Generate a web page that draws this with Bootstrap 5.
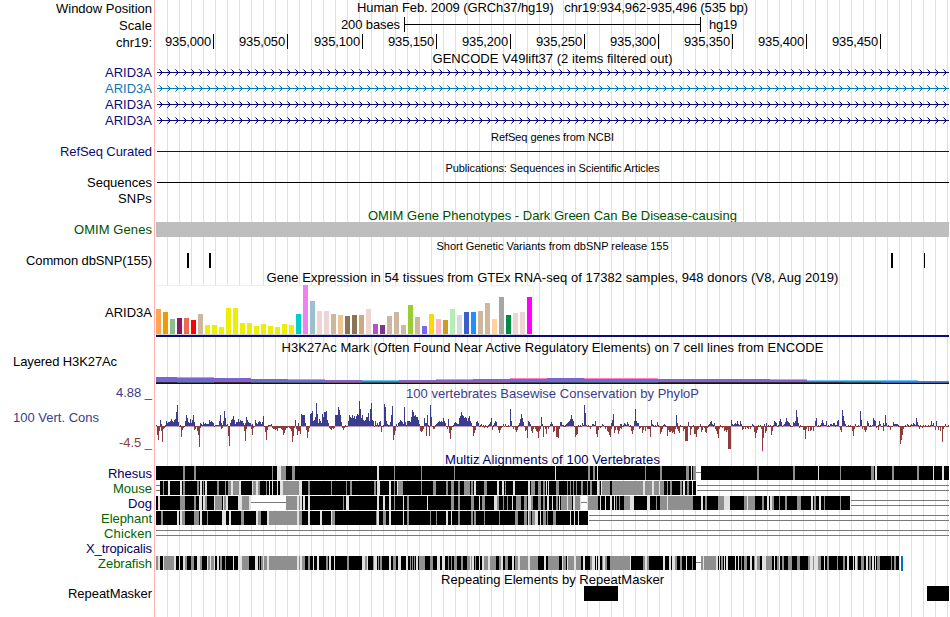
<!DOCTYPE html>
<html lang="en">
<head>
    <meta charset="UTF-8">
    <meta name="viewport" content="width=device-width, initial-scale=1.0">
    <title>chr19:934,962-935,496</title>
    <link rel="stylesheet" href="https://cdn.jsdelivr.net/npm/bootstrap@5.3.0/dist/css/bootstrap.min.css">
    <style>
        body {
            font-family: "Liberation Sans", Arial, sans-serif;
            font-size: 13px;
            line-height: 16px;
            color: #000;
            background: #fff;
        }

        .browser { width: 949px; height: 617px; }

        /* left column with the red divider */
        .side {
            width: 155px;
            border-right: 1px solid #ffb4b4;
            white-space: nowrap;
        }

        .side > div { padding-right: 2px; }
        .side .from-left { padding-left: 13px; }

        /* guide lines every 12px */
        .data {
            width: 793px;
            margin-left: 1px;
            white-space: pre;
            background: repeating-linear-gradient(90deg, transparent 0 11px, #dcdcff 11px 12px);
        }

        .data svg { display: block; flex-shrink: 0; shape-rendering: crispEdges; overflow: visible; }

        .h13 { height: 13px; }
        .h14 { height: 14px; }
        .h15 { height: 15px; }
        .h16 { height: 16px; }
        .h17 { height: 17px; }
        .h20 { height: 20px; }
        .h27 { height: 27px; }
        .h52 { height: 52px; }
        .h71 { height: 71px; }

        /* small text nudges inside a fixed row */
        .drop1 { padding-top: 1px; }
        .drop2 { padding-top: 2px; }
        .drop3 { padding-top: 3px; }

        .minor { font-size: 11px; }
        .navy { color: #0c0c78; }
        .teal { color: #0c78b4; }
        .green { color: #005000; }
        .cons { color: #3c3c8c; }
        .anti { color: #8c3c3c; }
        .species { color: #006400; }
        .multiz { color: #000064; }

        .tick { border-right: 1px solid #000; height: 15px; width: 74px; padding-right: 2px; }
        .tick.t0 { width: 58px; }
        .tick.t2 { width: 75px; }
        .before-scale { width: 244px; }
        .scalebar { width: 297px; height: 15px; border: solid #000; border-width: 0 1px; }
        .scalebar div { height: 1px; margin-top: 7px; background: #000; }
    </style>
</head>
<body>
<div class="browser d-flex">
    <div class="side d-flex flex-column text-end flex-shrink-0">
        <div class="h17 drop1"><span data-w="96">Window Position</span></div>
        <div class="h17 drop1"><span data-w="33">Scale</span></div>
        <div class="h17 drop1"><span data-w="36">chr19:</span></div>
        <div class="h13"></div>
        <div class="h16 drop1 navy"><span data-w="47">ARID3A</span></div>
        <div class="h16 drop1 teal"><span data-w="47">ARID3A</span></div>
        <div class="h16 drop1 navy"><span data-w="47">ARID3A</span></div>
        <div class="h16 drop1 navy"><span data-w="47">ARID3A</span></div>
        <div class="h16"></div>
        <div class="h16 navy"><span data-w="92">RefSeq Curated</span></div>
        <div class="h15"></div>
        <div class="h15"><span data-w="65">Sequences</span></div>
        <div class="h17 drop1"><span data-w="34">SNPs</span></div>
        <div class="h15"></div>
        <div class="h15 green"><span data-w="78">OMIM Genes</span></div>
        <div class="h16"></div>
        <div class="h15"><span data-w="126">Common dbSNP(155)</span></div>
        <div class="h17"></div>
        <div class="h52 drop3 d-flex align-items-center justify-content-end"><span data-w="47">ARID3A</span></div>
        <div class="h16"></div>
        <div class="h27 drop1 from-left text-start"><span data-w="104">Layered H3K27Ac</span></div>
        <div class="h71 d-flex flex-column justify-content-between pt-1">
            <div class="drop1 cons"><span data-w="36">4.88 _</span></div>
            <div class="cons from-left text-start"><span data-w="86">100 Vert. Cons</span></div>
            <div class="anti"><span data-w="33">-4.5 _</span></div>
        </div>
        <div class="h15"></div>
        <div class="h15 multiz"><span data-w="44">Rhesus</span></div>
        <div class="h15 species"><span data-w="39">Mouse</span></div>
        <div class="h15 multiz"><span data-w="24">Dog</span></div>
        <div class="h15 species"><span data-w="51">Elephant</span></div>
        <div class="h15 species"><span data-w="48">Chicken</span></div>
        <div class="h15 multiz"><span data-w="66">X_tropicalis</span></div>
        <div class="h15 species"><span data-w="54">Zebrafish</span></div>
        <div class="h15"></div>
        <div class="h15"><span data-w="84">RepeatMasker</span></div>
    </div>

    <div class="data d-flex flex-column text-center flex-shrink-0">
        <div class="h17"><span data-w="391">Human Feb. 2009 (GRCh37/hg19)   chr19:934,962-935,496 (535 bp)</span></div>
        <div class="h17 d-flex">
            <div class="before-scale text-end"><span data-w="59">200 bases</span></div>
            <div class="scalebar ms-1 me-2"><div></div></div>
            <div><span data-w="28">hg19</span></div>
        </div>
        <div class="h17 d-flex text-end" id="ruler"></div>
        <div class="h13"><span data-w="240">GENCODE V49lift37 (2 items filtered out)</span></div>
        <svg class="gene" width="793" height="16" data-color="#0c0c78"></svg>
        <svg class="gene" width="793" height="16" data-color="#0c78b4"></svg>
        <svg class="gene" width="793" height="16" data-color="#0c0c78"></svg>
        <svg class="gene" width="793" height="16" data-color="#0c0c78"></svg>
        <div class="h16 drop1 minor"><span data-w="123">RefSeq genes from NCBI</span></div>
        <svg width="793" height="16"><rect x="1" y="7" width="792" height="1" fill="#0c0c78"/></svg>
        <div class="h15 minor"><span data-w="214">Publications: Sequences in Scientific Articles</span></div>
        <svg width="793" height="15"><rect x="1" y="7" width="792" height="1"/></svg>
        <div class="h17"></div>
        <div class="h15 drop1 green"><span data-w="369">OMIM Gene Phenotypes - Dark Green Can Be Disease-causing</span></div>
        <svg width="793" height="15"><rect width="793" height="15" fill="#bebebe"/></svg>
        <div class="h16 drop1 minor"><span data-w="232">Short Genetic Variants from dbSNP release 155</span></div>
        <svg width="793" height="15">
            <rect x="31" width="2" height="15"/><rect x="53" width="2" height="15"/>
            <rect x="735" width="2" height="15"/><rect x="768" width="1" height="15"/>
        </svg>
        <div class="h17 drop2"><span data-w="572">Gene Expression in 54 tissues from GTEx RNA-seq of 17382 samples, 948 donors (V8, Aug 2019)</span></div>
        <svg id="gtex" width="793" height="52"></svg>
        <div class="h20 drop3"><span data-w="542">H3K27Ac Mark (Often Found Near Active Regulatory Elements) on 7 cell lines from ENCODE</span></div>
        <svg id="h3k" width="793" height="27"></svg>
        <div class="h16 drop2 cons"><span data-w="293">100 vertebrates Basewise Conservation by PhyloP</span></div>
        <svg id="phylop" width="793" height="52"></svg>
        <div class="h14 multiz"><span data-w="215">Multiz Alignments of 100 Vertebrates</span></div>
        <svg id="multiz" width="793" height="105"></svg>
        <div class="h15 drop1"><span data-w="223">Repeating Elements by RepeatMasker</span></div>
        <svg width="793" height="15"><rect x="428" width="34" height="15"/><rect x="771" width="22" height="15"/></svg>
    </div>
</div>

<script src="https://cdn.jsdelivr.net/npm/bootstrap@5.3.0/dist/js/bootstrap.bundle.min.js"></script>
<script>
    const LEFT = 156;

    function rect(x, y, w, h, fill) {
        return `<rect x="${x}" y="${y}" width="${w}" height="${h}" fill="${fill}"/>`;
    }

    // Ruler labels, one every 50 bases
    let ruler = '';
    for (let i = 0; i < 10; i++) {
        ruler += `<div class="tick flex-shrink-0 t${i}"><span data-w="46">935,${String(i * 50).padStart(3, '0')}</span></div>`;
    }
    document.getElementById('ruler').innerHTML = ruler;

    // Transcripts: a line with strand arrows
    document.querySelectorAll('.gene').forEach(svg => {
        const c = svg.dataset.color;
        let out = rect(1, 8, 792, 1, c);
        for (let x = 6; x < 793; x += 8) {
            out += rect(x - 1, 7, 1, 1, c) + rect(x - 1, 9, 1, 1, c);
            out += rect(x - 2, 6, 1, 1, c) + rect(x - 2, 10, 1, 1, c);
            out += `<g opacity=".7">${rect(x - 3, 5, 1, 1, c)}${rect(x - 3, 11, 1, 1, c)}</g>`;
            out += `<g opacity=".3">${rect(x - 2, 7, 1, 1, c)}${rect(x - 2, 9, 1, 1, c)}</g>`;
        }
        svg.innerHTML = out;
    });

    // GTEx: height and colour per tissue
    const heights = [25,22,15,16,16,14,20,9,9,7,26,26,11,11,8,10,8,7,10,9,20,49,33,23,23,20,19,18,19,19,25,10,9,18,22,9,
        29,17,8,20,15,14,25,19,22,22,23,31,15,37,19,21,22,37];
    const tissueColors = ('FFA54F EE9A00 8FBC8F 8B1C62 EE6A50 FF0000 CDB79E ' + 'EEEE00 '.repeat(13) +
        '00CDCD EE82EE 9AC0CD EED5D2 EED5D2 CDB79E EEC591 8B7355 8B7355 CDAA7D EED5D2 B452CD 7A378B CDB79E CDB79E CDB79E ' +
        '9ACD32 CDB79E 7A67EE FFD700 FFB6C1 CD9B1D B4EEB4 D9D9D9 3A5FCD 1E90FF CDB79E CDB79E FFD39B A6A6A6 008B45 EED5D2 EED5D2 FF00FF').split(' ');
    let gtex = rect(0, 0, 378, 50, '#f0f0f0') + rect(0, 1, 377, 48, '#fff') + rect(0, 49, 377, 1, '#d2d2d2');
    heights.forEach((h, i) => gtex += rect(i * 7, 49 - h, 5, h, '#' + tissueColors[i]));
    document.getElementById('gtex').innerHTML = gtex + rect(0, 50, 793, 2, '#0c0c78');

    // Layered signal: start, top, cap colour, base colour
    const layers = [
        [156,20,'','#2d2b35'], [177,20,'#ff80c8','#3c5a64'], [214,21,'','#46282d'], [251,22,'','#3c5a64'],
        [288,22,'#ff80c8','#466478'], [325,23,'','#825064'], [362,23,'#64c8ff','#3c5a64'], [399,23,'','#825064'],
        [436,22,'#ff80c8','#825064'], [473,22,'','#825064'], [510,21,'#ff80c8','#3c4b5a'], [547,21,'','#3c4b5a'],
        [584,21,'#ff80c8','#3c5a64'], [621,21,'#ff80c8','#3c5a64'], [658,22,'','#3c2d32'], [770,22,'#64c8ff','#3c2d32'],
        [807,23,'#64c8ff','#462d3c'], [844,23,'#64c8ff','#3c4b5a'], [881,23,'#64c8ff','#4664b4'], [918,24,'','#4664b4'], [949]
    ];
    let h3k = '';
    for (let i = 0; i < layers.length - 1; i++) {
        const [x, top, cap, base] = layers[i];
        const w = layers[i + 1][0] - x;
        h3k += rect(x - LEFT, top, w, 25 - top, '#7864d2');
        if (cap) h3k += rect(x - LEFT, top, w, 1, cap);
        h3k += rect(x - LEFT, 25, w, 1, base);
    }
    document.getElementById('h3k').innerHTML = h3k + rect(0, 26, 793, 1, '#140f14');

    // Conservation scores, runs of neighbouring columns as start:heights
    const up = `156:1 160:6,2 166:5,3,4,4,5,7,5,4,6,7,14,21,4 185:5,11,8,4,3,7,3,6,11,4 200:3,2,1,4,2,3,2,2,2,6,4,5,4,3
        215:1,1,1,1,5,11,3,1,5,15,8,1,2 230:3,6,7,10,6,2,4,4,7,4,6,5,5,3,1,3,9,6,4,3,3,1,2 255:6,3,2,4,5,4,2,4,10 269:1,1,2
        295:6 298:3 301:12,11,11,11,3 310:12,13,15,5,6,9,23,12,3,7,5,3,12,9,14,14,15,6,3 335:11,11,11,19,16,11,4
        348:5,11,9,8,11,8,10,7,10,12,11,25,17,8,11,6,5,6,9,9,13,5,17,23,6,5 375:5,1,3 379:4,5 384:22,19,5,2 389:1,4,11,20
        396:2 398:3,4,6,5,4,2,19,4,1,5,5,5,4,9,16,14,10,11,9,9,6,2 424:8,3,3,11 430:21,9 436:2,3,4,5,4,5,4,8,5,3 448:7
        454:3,4,3,2,2,8,10,14,11,10,8,9,8,5,8,10,5,3 476:4,5,3 481:2 489:2,4,8 494:3,5,4 503:2 505:2 510:17,5 519:3,7,12,8,4
        528:5,4,2 541:9,2 550:2,4,2 560:4,4,1 566:2,3,4,5,7,11,7,5 582:3,1,21,13,1 592:2,2,1,5 602:2,1 611:3,6,12 620:2,2
        624:3,2,1,4,2 634:5,17,5,3,3 651:6,2 657:4 664:2 676:11,3 688:4 700:2 709:2,4,5,2 714:3 731:6,2,1,2,3,2,5,2,1,5,2 752:2
        764:2 766:3 774:5,4,3 779:5,7,4 783:1,2,4,8,5,4,3 793:4,3,5,16,9,3 815:5,8 821:3,6,3,1,1,5 830:2,2,1,3,3 836:1,5,6
        842:16,10,5,2 855:2 860:15,6 867:5,3 872:1,8,6,5 878:1,5,2 883:3,1,11,3 893:4,2,2,2,2 907:2 911:2,1,3,2,1,8,4 931:5,1,3
        936:5 945:2`;
    const down = `157:9,14,5,1,5,16,3,2 181:11,4,2 194:4,3,1,5,9,21,2 221:3,2 228:10,20 244:5,15,3 251:3,9,2 265:6,14,4
        272:2,3,3,4,3,5,2,2,2,3,4,9,7,4,2,2,1,2,3,5,16,10,2 296:3,9,5,5,8 306:4,12,6,2 329:2,3,4,2,3,2 342:2,4,2 381:6
        393:14,9,5 420:5,6,5,3 426:10 429:10 433:3,3 447:3,1,7,13,4 473:10,7,4 484:2 487:2 492:4 498:4,7,4,2 513:3,1,4,6,4
        525:5,4,12 531:5,7,3,1,3,5,6,12,5,3 543:11,1,3,8,1,3 553:6,5,1,11,11,12,3 575:11,9,8 590:3 596:8,11,4,1,2
        605:3,1,5,6,9,11,3 614:7,4,1,4,8,5,2,3 631:5,8,4 639:3,2,1,7,4,1,5,1,3,3,3,11 660:8,6,3 667:10,4,6,6,5,7,6,8,3,1,3,5,7
        683:5,3,15,15,15 690:9,3 694:8,8,11,4,3,1,1,6,4,1,2,6,7,2 715:3,5,8,12,3 722:2,1,5,4,6,4,23,23,23 742:4,3,1,3,1,2,3,1,3
        754:6,12,7,4 761:3,24,12,1,7,5 771:9,5 799:2 803:4,4,13,3,1,5,1,5,4,1,5 840:4,6 852:5,10,3 862:3,1,4,6,4 876:2,1,4
        883:5 890:4 900:18,14,9,3 919:3 922:2 935:4 938:4,1,5,1,16,3`;

    function bars(text) {
        const cols = {};
        text.trim().split(/\s+/).forEach(run => {
            const [start, list] = run.split(':');
            list.split(',').forEach((h, i) => cols[+start + i] = +h);
        });
        return cols;
    }

    const ups = bars(up), downs = bars(down);
    let phylop = '';
    for (let x = LEFT; x < 949; x++) {
        if (ups[x]) phylop += rect(x - LEFT, 26 - ups[x], 1, ups[x], '#3c3c8c');
        if (downs[x]) phylop += rect(x - LEFT, 26, 1, downs[x], '#8c3c3c');
        else phylop += rect(x - LEFT, 26, 1, 1, ups[x] ? '#b4a0be' : '#8c3c3c');
        if (!ups[x] && !downs[x] && x * 7 % 5 < 2) phylop += rect(x - LEFT, 25, 1, 1, '#3c3c8c');
    }
    phylop += rect(762 - LEFT, 49, 1, 2, '#ff00ff');
    document.getElementById('phylop').innerHTML = phylop;

    // Alignments: black blocks, then g (grey) and l (light) stripes as start+width
    const species = [
        {
            blocks: [[156,696],[701,949]], single: [[696,701]], double: [],
            stripes: `g183+2 g194+2 g272+1 l277+4 g281+5 g292+3 l377+2 g394+1 g421+1 g454+1 l555+1 g588+2 g593+2 l597+1 g645+1 g660+2
                g686+3 l691+1 g693+3 g757+2 g793+2 l818+1 g840+1 g871+3 l875+2 g892+2 g917+2 l933+1 l942+2`
        },
        {
            blocks: [[160,696]], single: [], double: [[156,160],[697,949]],
            stripes: `g163+1 l168+2 l180+2 g183+2 g197+2 l200+2 g203+1 l205+2 g217+2 g225+1 g228+3 l231+2 g233+6 l239+2 l252+1 g253+3
                l256+2 g258+2 g266+1 l269+1 l272+1 l277+1 l280+3 g283+16 l299+3 g308+2 g331+1 g346+1 g350+2 g374+2 l377+3 l389+2
                g394+1 l397+1 g398+5 g421+1 g433+3 g446+2 g451+3 g458+2 g464+6 g471+2 l474+2 g484+3 l497+2 l502+2 g505+1 l513+2
                l528+2 g531+4 g538+3 g543+2 l546+1 l548+1 g556+3 g567+1 g570+1 g573+1 g576+1 g581+2 g587+1 g590+2 l597+2 g599+1
                l601+1 g602+8 g612+31 l643+2 g645+7 l652+2 g654+5 l659+1 g660+4 g667+1 g670+2 g680+2 l683+2 g687+2 l692+1`
        },
        {
            blocks: [[156,249],[286,581],[588,850]], single: [[251,286],[581,587]], double: [[851,949]],
            stripes: `l158+2 g180+5 g194+2 l199+3 l203+2 g205+2 l214+1 g215+7 l223+1 g224+2 l226+2 l238+4 g242+7 l249+2 g286+11 l297+2
                g299+1 l300+2 l303+2 l308+2 g343+1 l346+3 l377+2 l383+2 l389+2 g394+1 l403+1 g407+2 l427+1 g451+3 g458+2 g471+3
                l479+1 g482+3 l494+3 g497+2 g503+1 g507+1 l512+1 g516+5 g524+3 l528+3 g531+2 g538+3 g543+2 l547+2 l552+1 g556+2
                l559+1 g561+6 l567+1 g568+4 l573+2 g575+5 l580+1 l587+1 g588+10 l600+1 l605+1 l610+2 l614+1 g616+1 g619+1 g624+6
                l630+4 l647+3 g656+1 g660+7 l667+1 g668+25 l701+2 g705+2 g718+3 g721+3 l724+6 g744+3 l747+1 g748+7 g762+2 l767+2
                l770+2 g772+2 g779+1 g785+2 g797+4 l811+2 g814+2 l819+2 g824+1 g840+1`
        },
        {
            blocks: [[156,588]], single: [], double: [[589,949]],
            stripes: `g161+2 l177+2 l180+2 g182+3 g194+5 l200+2 g207+1 l222+4 l229+2 g241+3 l256+2 g258+3 l267+2 g269+28 l297+2 g299+3
                l308+2 l320+2 l331+1 g332+3 g376+1 l377+2 g383+3 l389+2 l403+1 g407+2 g430+1 g436+1 l446+2 l451+1 g458+2 g471+2
                g474+2 g484+1 g499+1 g515+3 g524+3 l528+1 g529+2 g532+3 l535+3 l540+1 g543+3 g547+1 g553+3 l570+1 l574+1 l578+1`
        },
        { blocks: [], single: [], double: [[156,949]], stripes: '' },
        { blocks: [], single: [], double: [], stripes: '' },
        {
            blocks: [[156,696],[701,899]], single: [[696,701]], double: [],
            stripes: `g156+2 l158+2 l163+1 g164+10 l174+2 l179+1 l183+2 g185+2 g191+3 l197+3 g200+2 l207+1 g208+2 l210+1 g211+3 l214+1
                l217+2 g220+2 g225+1 l233+1 l238+4 g242+7 l255+3 g259+1 g261+2 l263+1 g264+3 l267+2 g269+28 l297+2 g299+1 l300+2
                g302+3 g308+2 l313+1 l317+2 g326+2 l329+2 l334+1 g347+2 l362+3 g365+2 l367+1 g373+1 l374+3 g378+1 g380+2 l389+2
                g393+3 l398+3 l406+2 g410+1 g412+1 g414+1 l416+2 g419+6 g430+3 l437+3 l442+3 g448+1 g451+1 g454+3 g461+2 g467+3
                l470+1 g471+1 l472+2 g475+1 l479+1 l482+2 g484+4 l488+2 g490+6 g499+2 l501+2 g505+3 l512+2 g515+3 l518+2 g520+8
                l528+2 g530+4 g534+4 l544+2 g548+2 g550+9 l562+1 g563+3 l567+1 g568+6 l574+2 g576+5 l583+2 g590+2 l592+3 l596+1
                l598+2 g602+1 l603+2 g605+2 g610+20 l630+1 g643+2 l645+2 g647+2 l663+2 l669+2 l672+3 g675+2 g680+2 l686+1 g692+1
                g701+2 l703+1 g704+12 l716+2 l719+1 g721+2 l724+1 l726+2 l735+1 l738+1 g741+1 g744+3 l750+2 g754+1 l755+2 g757+3
                l762+4 g766+6 l774+1 g777+2 l779+1 g782+2 g788+4 g797+3 g808+2 l810+4 g813+1 l814+4 g818+3 l824+1 g827+2 g837+1
                g843+2 l847+2 l853+1 l855+2 g857+1 g861+3 l866+2 g869+2 l872+2 l875+1 g877+3 g891+1 g894+2`
        }
    ];
    const tones = { g: '#8f8f8f', l: '#e1e1e1' };
    let multiz = '';
    species.forEach((s, i) => {
        const y = i * 15;
        s.single.forEach(([a, b]) => multiz += rect(a - LEFT, y, b - a, 14, '#fff') + rect(a - LEFT, y + 6, b - a, 1, '#787878'));
        s.double.forEach(([a, b]) => multiz += rect(a - LEFT, y + 4, b - a, 1, '#787878') + rect(a - LEFT, y + 9, b - a, 1, '#787878'));
        s.blocks.forEach(([a, b]) => multiz += rect(a - LEFT, y, b - a, 14, '#000'));
        s.stripes.trim().split(/\s+/).filter(Boolean).forEach(t => {
            const [x, w] = t.slice(1).split('+');
            multiz += rect(x - LEFT, y, w, 14, tones[t[0]]);
        });
    });
    document.getElementById('multiz').innerHTML = multiz + rect(901 - LEFT, 90, 2, 15, '#0070c0');

    // Spread each label over its fixed width
    document.querySelectorAll('[data-w]').forEach(el => {
        const gap = (el.dataset.w - el.getBoundingClientRect().width) / el.textContent.length;
        el.style.letterSpacing = gap + 'px';
    });
</script>
</body>
</html>
